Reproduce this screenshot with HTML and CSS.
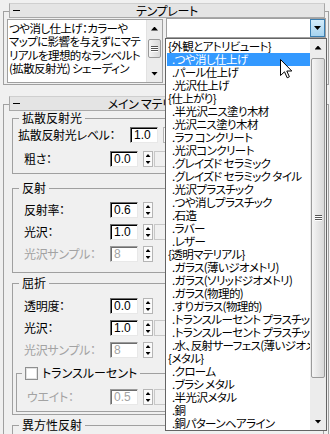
FILE: index.html
```html
<!DOCTYPE html>
<html lang="ja">
<head>
    <meta charset="UTF-8">
    <title>マテリアル</title>
    <link rel="stylesheet" href="styles.css">
</head>
<body>

    <div class="panel">
        <!-- テンプレート -->
        <div class="rollout">
            <div class="roll-head"><span class="minus"></span><span class="roll-title">テンプレート</span></div>
            <div class="roll-body tpl-body">
                <div class="desc">
                    <div class="desc-text">つや消し仕上げ：カラーや<br>マップに影響を与えずにマテ<br>リアルを理想的なランベルト<br>(拡散反射光) シェーディン</div>
                    <div class="vscroll">
                        <div class="sb-btn up"></div>
                        <div class="sb-track"><div class="sb-thumb small"><span class="grip"></span></div></div>
                        <div class="sb-btn down"></div>
                    </div>
                </div>
                <div class="combo">
                    <div class="combo-btn"><span class="arrow"></span></div>
                </div>
            </div>
        </div>

        <!-- メイン マテリアル パラメータ -->
        <div class="rollout main">
            <div class="roll-head"><span class="minus"></span><span class="roll-title shifted">メイン マテリアル パラメータ</span></div>
            <div class="roll-body main-body">

                <fieldset class="group g1">
                    <legend>拡散反射光</legend>
                    <div class="g-in">
                        <div class="row wide"><label>拡散反射光レベル：</label><span class="num">1.0</span><span class="spin"></span></div>
                        <div class="row"><label>粗さ：</label><span class="num">0.0</span><span class="spin"></span><span class="map"></span></div>
                    </div>
                </fieldset>

                <fieldset class="group g2">
                    <legend>反射</legend>
                    <div class="g-in">
                        <div class="row"><label>反射率：</label><span class="num">0.6</span><span class="spin"></span></div>
                        <div class="row"><label>光沢：</label><span class="num">1.0</span><span class="spin"></span><span class="map"></span></div>
                        <div class="row off"><label>光沢サンプル：</label><span class="num">8</span><span class="spin"></span></div>
                    </div>
                </fieldset>

                <fieldset class="group g3">
                    <legend>屈折</legend>
                    <div class="g-in">
                        <div class="row"><label>透明度：</label><span class="num">0.0</span><span class="spin"></span></div>
                        <div class="row"><label>光沢：</label><span class="num">1.0</span><span class="spin"></span><span class="map"></span></div>
                        <div class="row off"><label>光沢サンプル：</label><span class="num">8</span><span class="spin"></span></div>
                        <fieldset class="group subgroup">
                            <legend class="chk"><span class="box"></span>トランスルーセント</legend>
                            <div class="g-in">
                                <div class="row off"><label>ウエイト：</label><span class="num">0.5</span><span class="spin"></span><span class="map"></span></div>
                            </div>
                        </fieldset>
                    </div>
                </fieldset>

                <fieldset class="group g4">
                    <legend>異方性反射</legend>
                </fieldset>

            </div>
        </div>
    </div>

    <!-- ドロップダウンリスト -->
    <div class="droplist">
        <ul class="items">
            <li>{外観とアトリビュート}</li>
            <li class="item sel">.つや消し仕上げ</li>
            <li class="item">.パール仕上げ</li>
            <li class="item">.光沢仕上げ</li>
            <li>{仕上がり}</li>
            <li class="item">.半光沢ニス塗り木材</li>
            <li class="item">.光沢ニス塗り木材</li>
            <li class="item">.ラフ コンクリート</li>
            <li class="item">.光沢コンクリート</li>
            <li class="item">.グレイズド セラミック</li>
            <li class="item">.グレイズド セラミック タイル</li>
            <li class="item">.光沢プラスチック</li>
            <li class="item">.つや消しプラスチック</li>
            <li class="item">.石造</li>
            <li class="item">.ラバー</li>
            <li class="item">.レザー</li>
            <li>{透明マテリアル}</li>
            <li class="item">.ガラス(薄いジオメトリ)</li>
            <li class="item">.ガラス(ソリッドジオメトリ)</li>
            <li class="item">.ガラス(物理的)</li>
            <li class="item">.すりガラス(物理的)</li>
            <li class="item">.トランスルーセント プラスチック</li>
            <li class="item">.トランスルーセント プラスチック</li>
            <li class="item">.水、反射サーフェス(薄いジオメトリ)</li>
            <li>{メタル}</li>
            <li class="item">.クローム</li>
            <li class="item">.ブラシ メタル</li>
            <li class="item">.半光沢メタル</li>
            <li class="item">.銅</li>
            <li class="item">.銅パターンヘアライン</li>
        </ul>
        <div class="vscroll">
            <div class="sb-btn up"></div>
            <div class="sb-track"><div class="sb-thumb big"><span class="grip"></span></div></div>
            <div class="sb-btn down"></div>
        </div>
    </div>

    <!-- マウスカーソル -->
    <svg class="cursor" width="13" height="20" viewBox="0 0 13 20">
        <path d="M0.5 0.5 L0.5 16.5 L4.5 12.8 L7.2 18.8 L9.4 17.8 L6.8 12 L11.8 12 Z" fill="#fff" stroke="#000" stroke-width="1" stroke-linejoin="miter"/>
    </svg>

</body>
</html>
```

FILE: styles.css
```css
*{
    box-sizing: border-box;
}
html,body{
    margin: 0;padding: 0;
}
body{
    width: 330px;height: 434px;overflow: hidden;position: relative;
    background: #f0f0f0;color: #000;
    font-family: "Noto Sans CJK JP", "Noto Sans", sans-serif;font-size: 12px;
    font-feature-settings: "palt";
}

/* rollouts */
.panel{
    height: 434px;overflow: hidden;padding-top: 3px;
}
.rollout{
    margin-left: 3px;width: 326px;
}
.rollout.main{
    margin-top: 11px;
}
.roll-head{
    position: relative;z-index: 1;display: flex;align-items: center;
    height: 15px;margin: 0 4px 0 6px;line-height: 13px;
    background: #e4e4e4;border: 1px solid #a8a8a8;border-top-color: #cfcfcf;
}
.roll-head .minus{
    width: 7px;height: 1px;background: #000;margin: 0 4px 0 3px;
}
.roll-head .roll-title{
    flex: 1;text-align: center;white-space: nowrap;letter-spacing: -0.3px;
}
.roll-head .shifted{
    padding-left: 22px;
}
.roll-head:after{
    content: "";width: 14px;
}
.roll-body{
    margin-top: -7px;border: 1px solid #a0a0a0;
}
.tpl-body{
    display: flex;gap: 3px;padding: 7px 2px 1px 3px;
}
.main-body{
    height: 330px;border-bottom: 0;overflow: hidden;
}

/* description box */
.desc{
    display: flex;width: 156px;height: 64px;border: 1px solid #a0a0a0;background: #fff;
}
.desc-text{
    flex: 1;padding: 2px 0 0 1px;font-size: 11.5px;line-height: 13.4px;letter-spacing: -0.6px;
    white-space: nowrap;overflow: hidden;
}

/* scrollbar */
.vscroll{
    display: flex;flex-direction: column;width: 16px;background: #ececec;
    border-left: 1px solid #e2e2e2;
}
.sb-btn{
    height: 17px;display: flex;align-items: center;justify-content: center;
}
.sb-btn:before{
    content: "";width: 7px;height: 4px;background: #000;
}
.sb-btn.up:before{
    clip-path: polygon(50% 0, 100% 100%, 0 100%);
}
.sb-btn.down:before{
    clip-path: polygon(0 0, 100% 0, 50% 100%);
}
.sb-track{
    flex: 1;
}
.sb-thumb{
    margin: 2px 1px 0 1px;border: 1px solid #9a9a9a;border-radius: 2px;
    background: linear-gradient(to right, #f5f5f5, #e6e6e6 50%, #d9d9d9);
    display: flex;align-items: center;justify-content: center;
}
.sb-thumb.small{
    height: 19px;
}
.sb-thumb.big{
    height: 320px;
}
.grip{
    width: 7px;height: 6px;
    background: repeating-linear-gradient(to bottom, #555 0 1px, #fff 1px 2px);
}

/* combo */
.combo{
    width: 160px;height: 20px;margin-top: -1px;
    border: 1px solid #a0a0a0;background: #fff;
    display: flex;justify-content: flex-end;
}
.combo-btn{
    width: 15px;background: linear-gradient(#d4ecfa, #a6d3ef);border: 1px solid #3c7fb1;
    display: flex;align-items: center;justify-content: center;
}
.arrow{
    width: 7px;height: 4px;background: #000;
    clip-path: polygon(0 0, 100% 0, 50% 100%);
}

/* groups */
.group{
    margin: 6px 0 0 8px;padding: 0;width: 312px;min-inline-size: 0;
    border: 1px solid #a0a0a0;
}
.group legend{
    margin-left: 6px;padding: 0 3px;height: 14px;line-height: 14px;white-space: nowrap;
}
.g-in{
    padding: 2px 0 6px 11px;
}
.g2{
    margin-top: 7px;
}
.g2 > .g-in{
    padding: 7px 0 10px 11px;
}
.g3{
    margin-top: 3px;
}
.g3 > .g-in{
    padding: 8px 0 2px 11px;
}
.g4{
    margin-top: 3px;height: 30px;
}
.subgroup{
    margin: 8px 0 0 -8px;width: 300px;
}
.subgroup > .g-in{
    padding: 9px 0 6px 10px;
}
.subgroup legend{
    margin-left: 5px;
}
.chk .box{
    display: inline-block;vertical-align: -2px;width: 13px;height: 13px;margin-right: 4px;
    border: 1px solid #8e8f8f;background: #fff;box-shadow: inset 0 0 0 1px #e2e2e2;
}

/* rows */
.row{
    display: flex;align-items: center;height: 16px;
}
.row + .row{
    margin-top: 6px;
}
.g1 .row + .row{
    margin-top: 8px;
}
.row label{
    width: 86px;white-space: nowrap;line-height: 16px;letter-spacing: -0.3px;
}
.subgroup .row label{
    width: 83px;
}
.row.wide label{
    width: 112px;margin-left: -6px;
}
.num{
    width: 28px;height: 16px;padding-left: 3px;line-height: 14px;
    font-family: "Liberation Sans", sans-serif;font-size: 12px;
    background: #fff;border: 1px solid;border-color: #6d6d6d #e8e8e8 #e8e8e8 #6d6d6d;
    box-shadow: inset 1px 1px 0 #000;
}
.spin{
    width: 10px;height: 16px;margin-left: 5px;
    border: 1px solid #b5b5b5;background: #fbfbfb;
    display: flex;flex-direction: column;align-items: center;justify-content: space-around;
}
.spin:before,.spin:after{
    content: "";width: 5px;height: 3px;background: #000;
}
.spin:before{
    clip-path: polygon(50% 0, 100% 100%, 0 100%);
}
.spin:after{
    clip-path: polygon(0 0, 100% 0, 50% 100%);
}
.map{
    width: 40px;height: 16px;margin-left: 1px;border: 1px solid #c8c8c8;
}
.off label,.off .num{
    color: #a3a3a3;
}
.off .num{
    border-color: #9a9a9a #e8e8e8 #e8e8e8 #9a9a9a;box-shadow: inset 1px 1px 0 #6d6d6d;
}

/* dropdown list */
.droplist{
    position: absolute;left: 165px;top: 38px;z-index: 2;
    width: 162px;height: 393px;border: 1px solid #646464;background: #fff;
    display: flex;
}
.items{
    flex: 1;min-width: 0;list-style: none;margin: 0;padding: 1px 0 0 0;overflow: hidden;
    font-size: 11.5px;letter-spacing: -0.6px;
}
.items li{
    height: 13px;line-height: 13px;margin-left: 1px;padding-left: 1px;white-space: nowrap;
}
.items li.item{
    padding-left: 5px;
}
.items li.sel{
    background: #3399ff;color: #fff;
}
.droplist .vscroll{
    border-left: 0;
}

.cursor{
    position: absolute;left: 280px;top: 59px;z-index: 3;
}
```
